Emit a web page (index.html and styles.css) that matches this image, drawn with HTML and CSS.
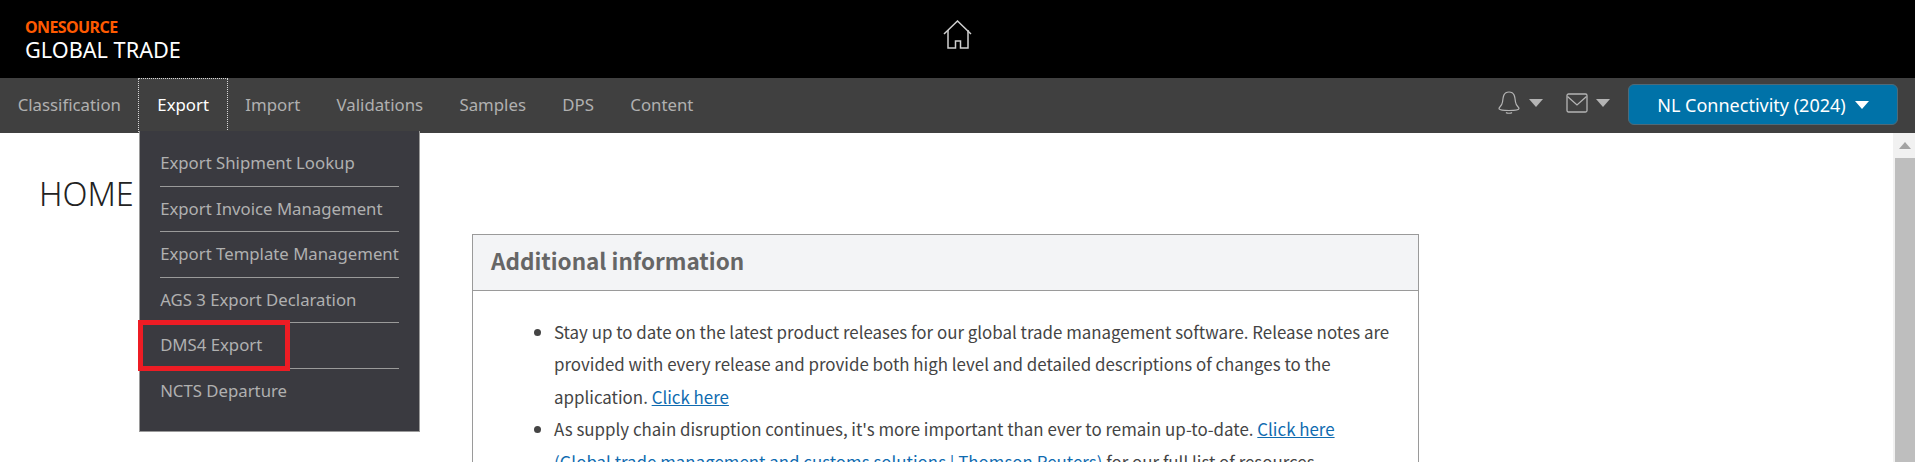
FILE: index.html
```html
<!DOCTYPE html>
<html lang="en">

<head>
  <meta charset="UTF-8">
  <meta name="viewport" content="width=device-width, initial-scale=1.0">
  <title>Global Trade</title>
  <link rel="stylesheet" href="styles.css">
</head>

<body>

  <header class="top-bar">
    <div class="brand">
      <div class="brand-top">ONESOURCE</div>
      <div class="brand-name">GLOBAL TRADE</div>
    </div>
    <svg class="home-icon" width="30" height="30" viewBox="0 0 30 30" fill="none" stroke="#d0d0d0" stroke-width="1.5">
      <path d="M1 14 L14.5 1 L28 14"/>
      <path d="M5 10 V28 H12.5 V21 H17.5 V28 H25 V10"/>
    </svg>
  </header>

  <nav class="nav-bar">
    <ul class="nav-list">
      <li class="nav-item">Classification</li>
      <li class="nav-item active">
        Export
        <ul class="dropdown">
          <li class="dropdown-item">Export Shipment Lookup</li>
          <li class="dropdown-item">Export Invoice Management</li>
          <li class="dropdown-item">Export Template Management</li>
          <li class="dropdown-item">AGS 3 Export Declaration</li>
          <li class="dropdown-item">DMS4 Export<span class="red-box"></span></li>
          <li class="dropdown-item">NCTS Departure</li>
        </ul>
      </li>
      <li class="nav-item">Import</li>
      <li class="nav-item">Validations</li>
      <li class="nav-item">Samples</li>
      <li class="nav-item">DPS</li>
      <li class="nav-item">Content</li>
    </ul>
    <div class="nav-right">
      <div class="icon-group">
        <svg width="24" height="24" viewBox="0 0 24 24" fill="none" stroke="#b4b4b4" stroke-width="1.2">
          <path d="M2 17.5 C2 16 5 15 5.5 11 C6 6 6.5 1 12 1 C17.5 1 18 6 18.5 11 C19 15 22 16 22 17.5 C22 19 17 19.5 12 19.5 C7 19.5 2 19 2 17.5 Z"/>
          <path d="M9 21.5 C10 22.5 14 22.5 15 21.5"/>
        </svg>
        <span class="caret"></span>
      </div>
      <div class="icon-group">
        <svg width="22" height="20" viewBox="0 0 22 20" fill="none" stroke="#b4b4b4" stroke-width="1.3">
          <rect x="1" y="1" width="20" height="18" rx="1.5"/>
          <path d="M1.5 3.5 L11 12 L20.5 3.5"/>
        </svg>
        <span class="caret"></span>
      </div>
      <button class="account-btn">NL Connectivity (2024)<span class="caret white"></span></button>
    </div>
  </nav>

  <div class="page">
    <main class="content">
      <h1 class="page-title">HOME</h1>
      <section class="panel">
        <h2 class="panel-head">Additional information</h2>
        <ul class="panel-list">
          <li>Stay up to date on the latest product releases for our global trade management software. Release notes are provided with every release and provide both high level and detailed descriptions of changes to the application. <a href="#">Click here</a></li>
          <li>As supply chain disruption continues, it's more important than ever to remain up-to-date. <a href="#">Click here (Global trade management and customs solutions | Thomson Reuters)</a> for our full list of resources.</li>
        </ul>
      </section>
    </main>
    <div class="scrollbar">
      <span class="scroll-arrow"></span>
      <div class="scroll-thumb"></div>
    </div>
  </div>

</body>

</html>
```

FILE: styles.css
```css
html, body {
  height: 100%;
  margin: 0;
  overflow: hidden;
}

body {
  font-family: "Noto Sans", sans-serif;
  background: white;
  display: flex;
  flex-direction: column;
}

ul {
  list-style: none;
  margin: 0;
  padding: 0;
}

.top-bar {
  height: 78px;
  flex: none;
  background: black;
  position: relative;
  display: flex;
  justify-content: center;
  align-items: center;
}

.brand {
  position: absolute;
  left: 25px;
  top: 18px;
}

.brand-top {
  color: #ff5a00;
  font-size: 16px;
  line-height: 18px;
  font-weight: 700;
  letter-spacing: -0.6px;
}

.brand-name {
  color: white;
  font-size: 21.7px;
  line-height: 28px;
}

.home-icon {
  margin-top: -8px;
}

.nav-bar {
  height: 55px;
  flex: none;
  background: #404040;
  display: flex;
  justify-content: space-between;
  position: relative;
}

.nav-list {
  display: flex;
  margin-left: -0.5px;
}

.nav-item {
  color: #b0b0b0;
  font-size: 16.8px;
  padding: 0 18.2px;
  height: 52px;
  margin-top: 1px;
  line-height: 52px;
  position: relative;
}

.nav-item.active {
  color: white;
  outline: 1px dotted #d8d8d8;
}

.dropdown {
  position: absolute;
  left: 0;
  top: 52px;
  width: 281px;
  height: 301px;
  box-sizing: border-box;
  background: #3a3a40;
  border: 1px solid #9a9a9a;
  border-top: none;
  padding: 10px 20px 0;
  z-index: 5;
}

.dropdown-item {
  color: #b0b0b0;
  font-size: 16.75px;
  line-height: 44px;
  height: 45.5px;
  box-sizing: border-box;
  white-space: nowrap;
  border-bottom: 1px solid #9a9a9a;
  position: relative;
}

.dropdown-item:last-child {
  border-bottom: none;
}

.red-box {
  position: absolute;
  left: -22px;
  top: -3px;
  width: 152px;
  height: 51px;
  box-sizing: border-box;
  border: 5px solid #ed1c24;
}

.nav-right {
  display: flex;
  align-items: center;
  padding-right: 17px;
}

.icon-group {
  display: flex;
  align-items: center;
  gap: 8px;
  margin-right: 23px;
  padding-bottom: 6px;
}

.icon-group + .icon-group {
  margin-right: 18px;
}

.caret {
  width: 0;
  height: 0;
  border-left: 7px solid transparent;
  border-right: 7px solid transparent;
  border-top: 8px solid #b4b4b4;
}

.caret.white {
  border-top-color: white;
  margin-left: 9px;
}

.account-btn {
  width: 270px;
  height: 41px;
  margin-bottom: 2px;
  background: #0072a8;
  border: 1px solid #4f6a78;
  border-radius: 6px;
  color: white;
  font-family: inherit;
  font-size: 18px;
  display: flex;
  align-items: center;
  justify-content: center;
}

.page {
  flex: 1;
  display: flex;
  min-height: 0;
}

.content {
  flex: 1;
  overflow: hidden;
  padding-left: 39px;
}

.page-title {
  font-family: "Noto Sans", sans-serif;
  font-size: 32.5px;
  line-height: 40px;
  font-weight: 300;
  color: #222;
  margin: 41px 0 0;
}

.panel {
  width: 947px;
  box-sizing: border-box;
  margin: 20px 0 0 433px;
  border: 1px solid #9a9a9a;
}

.panel-head {
  height: 55px;
  margin: 0;
  padding-left: 18px;
  background: #f3f4f6;
  border-bottom: 1px solid #9a9a9a;
  font-family: "Noto Sans CJK SC", "Noto Sans", sans-serif;
  font-size: 22.5px;
  font-weight: 700;
  line-height: 50px;
  color: #666;
}

.panel-list {
  list-style: disc;
  padding: 25px 26px 0 81px;
  font-family: "Noto Sans CJK SC", "Noto Sans", sans-serif;
  font-size: 16.9px;
  line-height: 32.4px;
  color: #444;
}

.panel-list a {
  color: #0f6bb0;
}

.scrollbar {
  width: 22px;
  flex: none;
  box-sizing: border-box;
  padding-left: 2px;
  background: #f1f1f1;
  display: flex;
  flex-direction: column;
  align-items: center;
}

.scroll-arrow {
  width: 0;
  height: 0;
  margin: 9px 0;
  border-left: 6px solid transparent;
  border-right: 6px solid transparent;
  border-bottom: 7px solid #a3a3a3;
}

.scroll-thumb {
  width: 100%;
  flex: 1;
  background: #bebebe;
}
```
